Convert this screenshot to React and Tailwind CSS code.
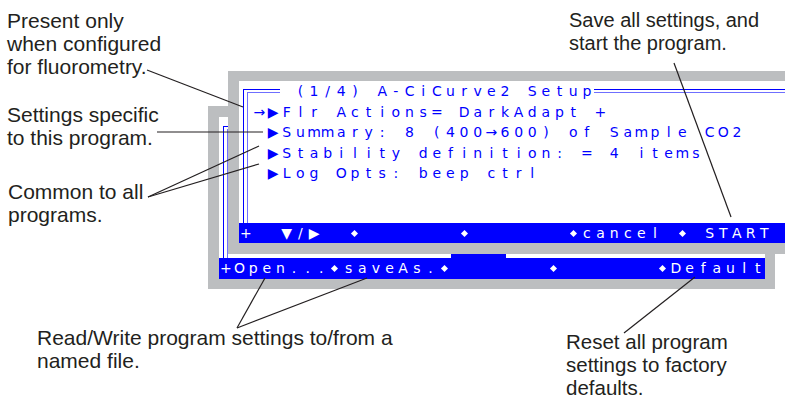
const CELL = 'w-[13.65px] shrink-0 text-center';
const BLUE = 'border-[#0000ff]';
const PALE = 'border-[#6f6fff]';

// one LCD character per cell, 40 cells per line
const Cells = ({ text }) =>
  [...text].map((ch, i) =>
    ch === '♦' ? (
      <span key={i} className={`${CELL} flex items-center justify-center`}>
        <span className="h-[5px] w-[5px] rotate-45 bg-white" />
      </span>
    ) : (
      <span key={i} className={CELL}>
        {ch === ' ' ? '\u00a0' : ch}
      </span>
    )
  );

// double horizontal rule of the title line
const HRule = ({ className = '' }) => (
  <div className={`flex flex-col pt-[8px] ${className}`}>
    <div className={`border-t ${BLUE}`} />
    <div className={`mt-[2px] border-t ${PALE}`} />
  </div>
);

// double vertical rule in column 0
const Corner = ({ top }) => (
  <div className={`flex w-[13.65px] shrink-0 flex-col pl-[4px] ${top}`}>
    <div className={`flex flex-1 flex-col border-l border-t ${BLUE}`}>
      <div className={`ml-[3px] mt-[2px] flex-1 border-l border-t ${PALE}`} />
    </div>
  </div>
);

const Row = ({ text }) => (
  <div className="flex h-[20.6px] leading-[20.6px]">
    <Cells text={text} />
  </div>
);

const Bar = ({ text, height }) => (
  <div className={`flex ${height} items-center bg-[#0000ff] text-white`}>
    <Cells text={text} />
  </div>
);

const Note = ({ className, lines }) => (
  <div className={`absolute leading-[23px] text-[#231f20] ${className}`}>
    {lines.map((l) => (
      <div key={l} className="whitespace-nowrap">{l}</div>
    ))}
  </div>
);

export default function App() {
  return (
    <div className="relative h-[396px] w-[785px] overflow-hidden bg-white font-['Liberation_Sans',Arial,sans-serif]">
      {/* Back window: Open / saveAs / Default */}
      <div className="absolute left-[208px] top-[106px] border-b-[10px] border-l-[11px] border-r-[10px] border-t-[11px] border-[#bcbec0] font-['DejaVu_Sans',sans-serif] text-[14px]">
        <div className="flex h-[162px] w-[546px] flex-col bg-white">
          <div className="flex flex-1">
            <Corner top="pt-[9px]" />
            <div className="flex flex-1 flex-col">
              <div className="flex-1" />
              <div className="flex h-[5px]">
                <div className="w-[218.4px]" />
                <div className="w-[54.6px] bg-[#0000ff]" />
              </div>
            </div>
          </div>
          <Bar height="h-[21px]" text="+Open...♦saveAs.♦       ♦       ♦Default" />
        </div>
      </div>

      {/* Front window: program setup */}
      <div className="absolute left-[228px] top-[71px] border-b-[11px] border-l-[11px] border-r-[10px] border-t-[10px] border-[#bcbec0] font-['DejaVu_Sans',sans-serif] text-[14px] text-[#0000ff]">
        <div className="flex h-[162px] w-[546px] flex-col bg-white">
          <div className="flex flex-1">
            <Corner top="pt-[8px]" />
            <div className="flex flex-1 flex-col">
              <div className="flex h-[20.6px] leading-[20.6px]">
                <HRule className="w-[27.3px]" />
                <Cells text=" (1/4) A-CiCurve2 Setup" />
                <HRule className="flex-1" />
              </div>
              <Row text="→▶Flr Actions= DarkAdapt +" />
              <Row text=" ▶Summary: 8 (400→600) of Sample CO2" />
              <Row text=" ▶Stability definition: = 4 items" />
              <Row text=" ▶Log Opts: beep ctrl" />
            </div>
          </div>
          <Bar height="h-[20px]" text="+  ▼/▶  ♦       ♦       ♦cancel ♦ START " />
        </div>
      </div>

      {/* Callouts */}
      <Note className="left-[7px] top-[9px] text-[21px]" lines={['Present only', 'when configured', 'for fluorometry.']} />
      <Note className="left-[7px] top-[103px] text-[21px]" lines={['Settings specific', 'to this program.']} />
      <Note className="left-[8px] top-[180px] text-[21px]" lines={['Common to all', 'programs.']} />
      <Note className="left-[569px] top-[9px] text-[20px]" lines={['Save all settings, and', 'start the program.']} />
      <Note className="left-[37px] top-[326px] text-[21px]" lines={['Read/Write program settings to/from a', 'named file.']} />
      <Note className="left-[566px] top-[330px] text-[20.5px]" lines={['Reset all program', 'settings to factory', 'defaults.']} />

      <svg className="pointer-events-none absolute inset-0" width="785" height="396">
        <g stroke="#231f20" strokeWidth="1.2" fill="none">
          <line x1="147" y1="70" x2="243" y2="107" />
          <line x1="157" y1="132" x2="263" y2="132" />
          <line x1="148" y1="197" x2="259" y2="146" />
          <line x1="148" y1="197" x2="259" y2="164" />
          <line x1="674" y1="63" x2="731" y2="217" />
          <line x1="237" y1="328" x2="265" y2="278" />
          <line x1="237" y1="328" x2="367" y2="278" />
          <line x1="624" y1="333" x2="695" y2="277" />
        </g>
      </svg>
    </div>
  );
}
